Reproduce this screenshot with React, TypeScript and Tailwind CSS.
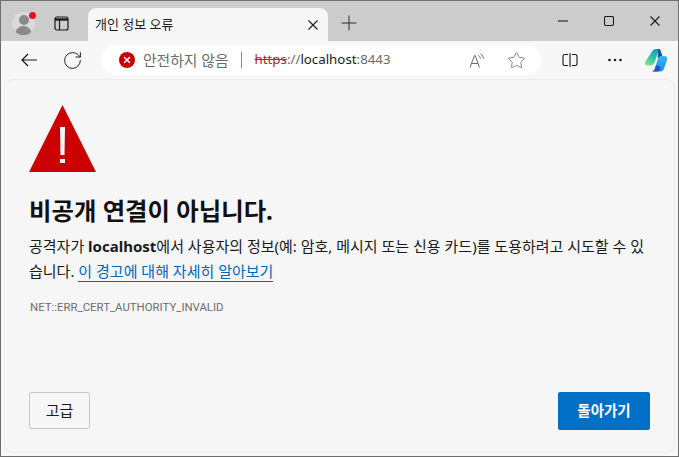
import { RotateCw, Plus, Star, X } from 'lucide-react'

const font = { fontFamily: '"Noto Sans", "Noto Sans CJK KR", sans-serif' }

function Profile() {
  return (
    <div className="h-[23px] w-[23px] overflow-hidden rounded-full bg-[#dadada]">
      <div className="mx-auto mt-[3px] h-[10px] w-[10px] rounded-full bg-[#8a8a8a]" />
      <div className="mx-auto mt-[1px] h-[10px] w-[17px] rounded-t-full bg-[#8a8a8a]" />
    </div>
  )
}

function TabsIcon() {
  return (
    <svg width="15" height="15" viewBox="0 0 15 15" fill="none" stroke="#1a1a1a" strokeWidth="1.2">
      <rect x="1" y="1" width="13" height="13" rx="2" />
      <path d="M1 3.5h13" strokeWidth="2.4" />
      <path d="M5.500 4v10" />
    </svg>
  )
}

function CloseIcon() {
  return (
    <svg width="10" height="10" viewBox="0 0 10 10" fill="none" stroke="#1a1a1a" strokeWidth="1.1">
      <path d="M.5 .5l9 9M9.500 .5l-9 9" />
    </svg>
  )
}

function MinIcon() {
  return (
    <svg width="10" height="10" viewBox="0 0 10 10" fill="none" stroke="#1a1a1a" strokeWidth="1.1">
      <path d="M0 5h10" />
    </svg>
  )
}

function MaxIcon() {
  return (
    <svg width="10" height="10" viewBox="0 0 10 10" fill="none" stroke="#1a1a1a" strokeWidth="1.1">
      <rect x=".5" y=".5" width="9" height="9" rx="1.500" />
    </svg>
  )
}

function BackIcon() {
  return (
    <svg width="16" height="14" viewBox="0 0 16 14" fill="none" stroke="#1a1a1a" strokeWidth="1.2">
      <path d="M16 7H1M7 1L1 7l6 6" />
    </svg>
  )
}

function ReadAloud() {
  return (
    <svg width="17" height="16" viewBox="0 0 17 16" fill="none" stroke="#6b6b6b" strokeWidth="1">
      <path d="M1 15.500L5.500 3.500h.6l4.400 12M2.600 11.500h6.400" />
      <path d="M9.500 3.500c1.200 .8 1.800 1.700 2 3M11.500 1.800c1.800 1.200 2.800 2.800 3 5" />
    </svg>
  )
}

function SplitIcon() {
  return (
    <svg width="16" height="14" viewBox="0 0 16 14" fill="none" stroke="#1a1a1a" strokeWidth="1.1">
      <path d="M6 1.500H3A1.800 1.800 0 0 0 1 3.300v7.400a1.800 1.800 0 0 0 2 1.800h3" />
      <path d="M10 1.500h3a1.800 1.800 0 0 1 2 1.800v7.400a1.800 1.800 0 0 1-2 1.800h-3" />
      <path d="M8 0v14" />
    </svg>
  )
}

function DotsIcon() {
  return (
    <svg width="14" height="4" viewBox="0 0 14 4" fill="#1a1a1a">
      <circle cx="1.500" cy="2" r="1.300" />
      <circle cx="7" cy="2" r="1.300" />
      <circle cx="12.500" cy="2" r="1.300" />
    </svg>
  )
}

function Copilot() {
  return (
    <svg width="25" height="25" viewBox="0 0 25 25">
      <defs>
        <linearGradient id="cpl" x1="0.6" y1="0" x2="0.2" y2="1">
          <stop offset="0" stopColor="#1a9bd8" />
          <stop offset="0.55" stopColor="#35c8a5" />
          <stop offset="1" stopColor="#8ce08a" />
        </linearGradient>
        <linearGradient id="cpr" x1="0.5" y1="0" x2="0.5" y2="1">
          <stop offset="0" stopColor="#35b8f2" />
          <stop offset="1" stopColor="#1a8de0" />
        </linearGradient>
      </defs>
      <path d="M8 3.500C8.800 1.900 10 1 11.800 1h5c-1.500 .5-2.300 1.500-2.800 3l-3 9.500c-.8 2.400-2.200 4-4.500 4H3.500c-2 0-3-1.600-2.300-3.500z" fill="url(#cpl)" />
      <path d="M14 1c1.500 0 2.600 .8 3 2.500l1.600 5.500-5 1z" fill="#0f5f96" />
      <path d="M17 8h3.500c2 0 3.300 1.600 2.700 3.500L20 20.500c-.7 2-2 3-3.800 3H8c1.500-.4 2.500-1.500 3-3l2.600-9C14.100 9.400 15.300 8 17 8z" fill="url(#cpr)" />
      <path d="M8 23.500c1.500-.4 2.500-1.500 3-3l1-3.500 4 1.500c.6 2.700-.5 5-2.500 5z" fill="#2457c5" />
    </svg>
  )
}

export default function App() {
  return (
    <div className="flex h-[457px] w-[679px] flex-col overflow-hidden border border-[#6e6e6e] bg-[#f7f7f7] text-[#1a1a1a]" style={font}>
      {/* tab strip */}
      <div className="flex h-[40px] shrink-0 items-end bg-[#cccccc]">
        <div className="flex h-full w-[87px] items-center pl-[11px] pt-[5px]">
          <div className="relative">
            <Profile />
            <div className="absolute right-[-1px] top-0 h-[7px] w-[7px] rounded-full bg-[#e81123]" />
          </div>
          <div className="ml-[19px]"><TabsIcon /></div>
        </div>
        <div className="flex h-[33px] w-[240px] items-center justify-between rounded-t-lg bg-[#f7f7f7] pl-[7px] pr-[10px]">
          <span className="text-[13px] leading-none">개인 정보 오류</span>
          <CloseIcon />
        </div>
        <div className="ml-[9px] flex h-full items-center pt-[4px]">
          <Plus size={24} strokeWidth={0.9} />
        </div>
        <div className="ml-auto mr-[18px] flex h-full items-center gap-[36px]">
          <MinIcon />
          <MaxIcon />
          <CloseIcon />
        </div>
      </div>

      {/* toolbar */}
      <div className="flex h-[38px] shrink-0 items-center pl-[20px]">
        <BackIcon />
        <RotateCw size={21} strokeWidth={1.1} className="ml-[25px]" />
        <div className="ml-[18px] flex h-[30px] w-[440px] items-center rounded-full bg-white pl-[18px] pr-[15px]">
          <div className="flex h-[16px] w-[16px] items-center justify-center rounded-full bg-[#c80000]">
            <X size={10} strokeWidth={3.5} color="#ffffff" />
          </div>
          <span className="ml-[8px] text-[14.8px] leading-none text-[#6b6b6b]">안전하지 않음</span>
          <div className="ml-[12px] h-[16px] w-px bg-[#8a8a8a]" />
          <span className="ml-[13px] text-[13.3px] leading-none">
            <span className="text-[#b3261e] line-through">https</span>
            <span className="text-[#6b6b6b]">://</span>
            <span>localhost</span>
            <span className="text-[#6b6b6b]">:8443</span>
          </span>
          <div className="ml-auto flex items-center gap-[21px]">
            <ReadAloud />
            <Star size={19} strokeWidth={1} color="#6b6b6b" />
          </div>
        </div>
        <div className="ml-[21px]"><SplitIcon /></div>
        <div className="ml-[30px]"><DotsIcon /></div>
        <div className="ml-[22px]"><Copilot /></div>
      </div>

      {/* error page */}
      <div className="mx-[3px] mb-[3px] flex min-h-0 flex-1 flex-col rounded-lg border border-[#ececec] bg-[#f6f6f6] pb-[22px] pl-[24px] pr-[24px] pt-[25px]">
        <svg width="67" height="67" viewBox="0 0 67 67" className="shrink-0">
          <path d="M33.500 0L67 67H0z" fill="#cc0000" />
          <path d="M31 22h5l-.5 28h-4zM31 54h5v4h-5z" fill="#f6f6f6" />
        </svg>
        <h1 className="mt-[22px] text-[24.4px] font-bold leading-[34px] text-[#111111]">비공개 연결이 아닙니다.</h1>
        <p className="mt-[6px] text-[15px] leading-[25px]">
          공격자가 <b>localhost</b>에서 사용자의 정보(예: 암호, 메시지 또는 신용 카드)를 도용하려고 시도할 수 있습니다.{' '}
          <a className="border-b border-[#0067b8] text-[#0067b8]">이 경고에 대해 자세히 알아보기</a>
        </p>
        <p className="ml-px mt-[15px] font-[Roboto] text-[11.4px] leading-[16px] text-[#6e6e6e]">NET::ERR_CERT_AUTHORITY_INVALID</p>
        <div className="mt-auto flex items-start justify-between">
          <button className="h-[37px] w-[61px] rounded-[2px] border border-[#c8c8c8] text-[15px]">고급</button>
          <button className="h-[38px] w-[92px] rounded-[2px] bg-[#0070c6] text-[14.5px] font-bold text-white">돌아가기</button>
        </div>
      </div>
    </div>
  )
}
